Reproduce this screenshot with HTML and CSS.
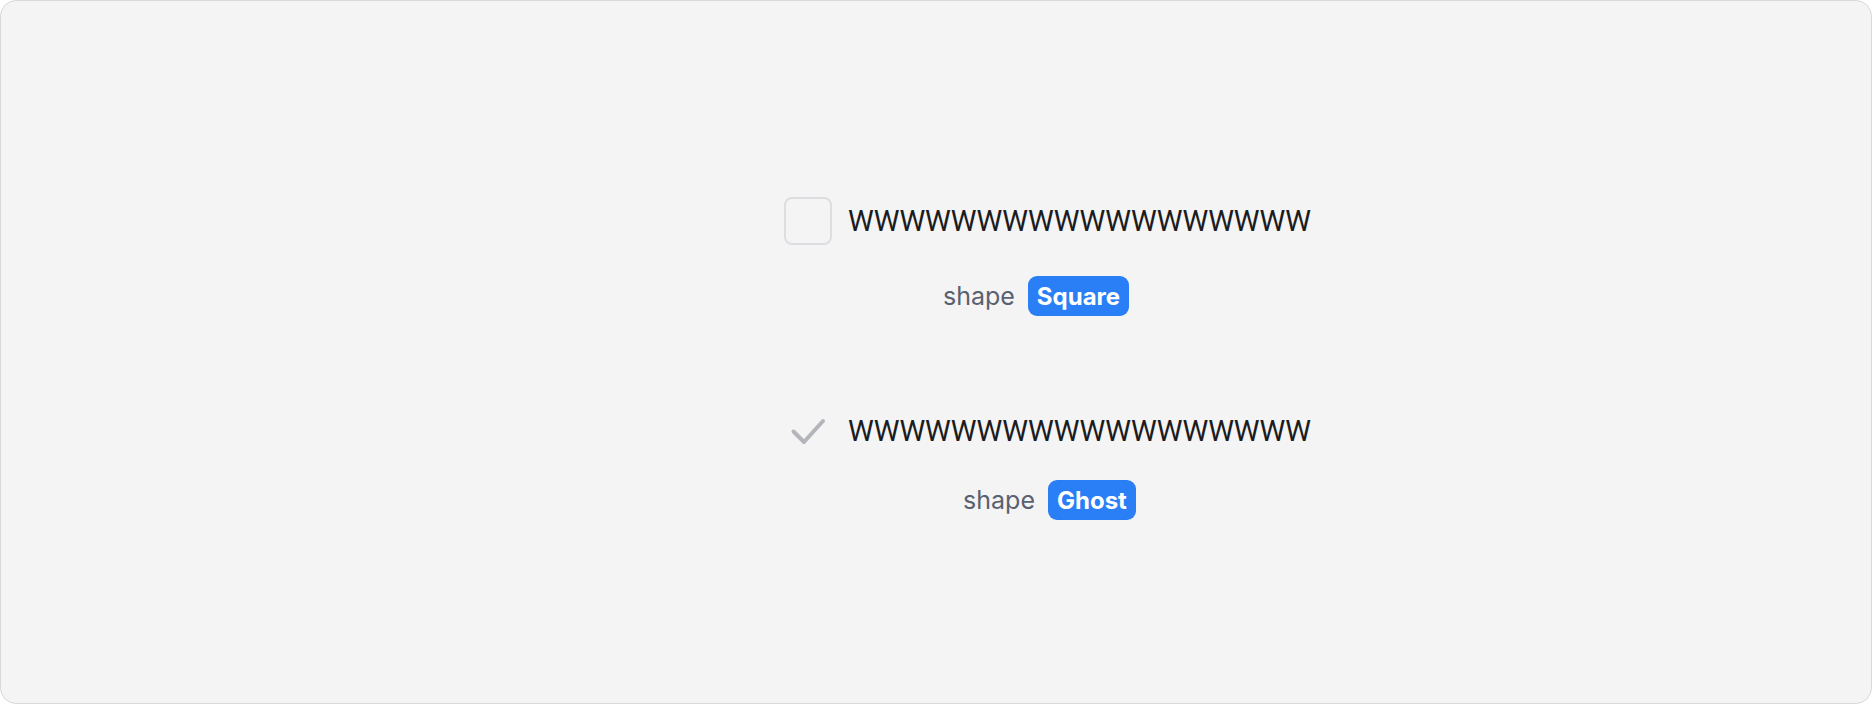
FILE: index.html
```html
<!DOCTYPE html>
<html lang="en">
<head>
    <meta charset="UTF-8">
    <meta name="viewport" content="width=device-width, initial-scale=1.0">
    <title>Checkbox shapes</title>
    <link rel="stylesheet" href="styles.css">
</head>
<body>
    <div class="frame">
        <div class="stack">
            <div class="item">
                <label class="row">
                    <span class="box box-square"></span>
                    <span class="label">WWWWWWWWWWWWWWWWWW</span>
                </label>
                <div class="meta meta-square">
                    <span class="key">shape</span>
                    <span class="badge">Square</span>
                </div>
            </div>

            <div class="item item-ghost">
                <label class="row">
                    <span class="box box-ghost">
                        <svg width="48" height="48" viewBox="0 0 48 48">
                            <polyline points="9.5,24.5 20,35 39,14" fill="none" stroke="#b4b5ba" stroke-width="4" stroke-linecap="round" stroke-linejoin="round"/>
                        </svg>
                    </span>
                    <span class="label">WWWWWWWWWWWWWWWWWW</span>
                </label>
                <div class="meta meta-ghost">
                    <span class="key">shape</span>
                    <span class="badge">Ghost</span>
                </div>
            </div>
        </div>
    </div>
</body>
</html>
```

FILE: styles.css
```css
body {
    margin: 0;
    background-color: white;
    font-family: Inter, "Noto Sans", Arial, sans-serif;
}

.frame {
    box-sizing: border-box;
    width: 1872px;
    height: 704px;
    padding: 13px 0 0 223px;
    display: flex;
    justify-content: center;
    align-items: center;
    background-color: #f4f4f4;
    border: 1px solid #d9d9d9;
    border-radius: 16px;
}

.stack {
    display: flex;
    flex-direction: column;
    gap: 91px;
}

.item {
    display: flex;
    flex-direction: column;
    align-items: center;
    gap: 31px;
}

.item-ghost {
    gap: 25px;
}

.row {
    display: flex;
    align-items: center;
    gap: 16px;
}

.box {
    box-sizing: border-box;
    width: 48px;
    height: 48px;
    flex-shrink: 0;
}

.box-square {
    border: 2px solid #dedee2;
    border-radius: 8px;
}

.box-ghost svg {
    display: block;
}

.label {
    font-family: Roboto, Arial, sans-serif;
    font-size: 29px;
    line-height: 48px;
    color: #1c1c1e;
}

.meta {
    display: flex;
    align-items: center;
    gap: 13px;
    height: 40px;
}

.meta-square {
    margin-right: 23px;
}

.meta-ghost {
    margin-left: 4px;
}

.key {
    font-size: 25px;
    color: #596170;
}

.badge {
    display: flex;
    align-items: center;
    height: 40px;
    padding: 0 9px;
    border-radius: 9px;
    background-color: #2a7ff6;
    color: white;
    font-size: 24px;
    font-weight: bold;
}
```
